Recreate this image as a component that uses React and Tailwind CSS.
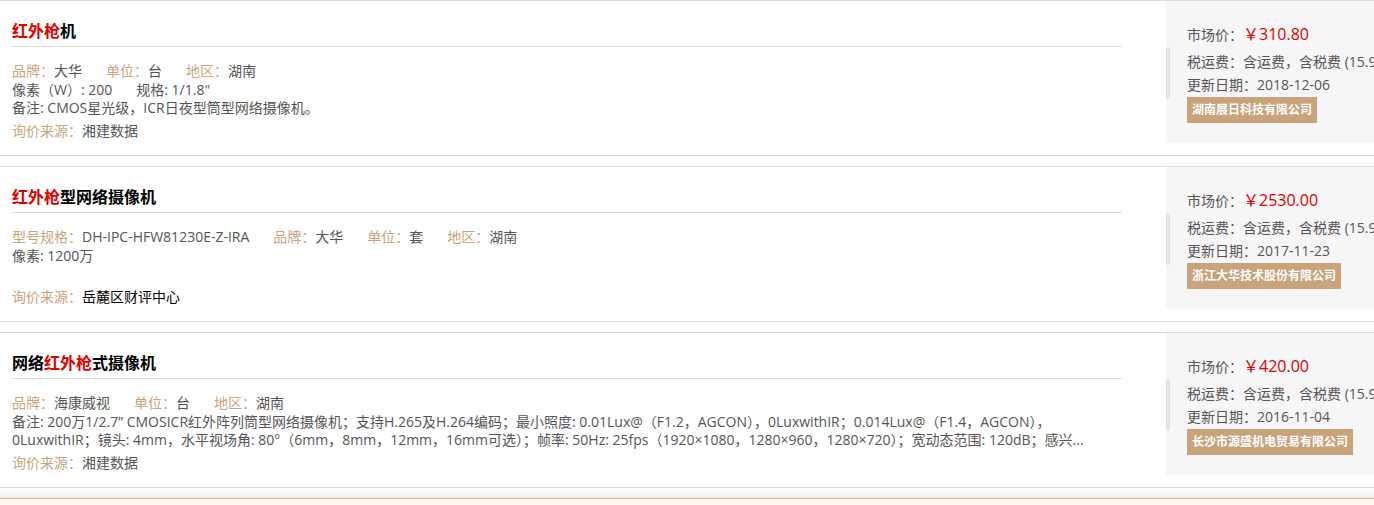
import React from "react";

const FONT = { fontFamily: '"Microsoft YaHei", "Open Sans", "Noto Sans CJK SC", sans-serif' };

function Field({ label, value }) {
  return (
    <span className="mr-[24px] whitespace-nowrap">
      <span className="text-[#c9a47e]">{label}：</span>
      <span className="text-[#555]">{value}</span>
    </span>
  );
}

function ItemWrap({ title, fields, lines, source, sourceClass, price, date, company }) {
  return (
    <div className="flex border-y border-[#dddddd] h-[156px]">
      <div className="ml-[11px] w-[1111px] shrink-0">
        <div className="pt-[17px] h-[46px] border-b border-[#dddddd] text-[16px] leading-[26px] font-bold text-black pl-[1px] whitespace-nowrap">
          {title}
        </div>
        <div className="mt-[15px] h-[57px] overflow-hidden text-[14px] leading-[18.5px] text-[#555] pl-[1px]">
          <div className="whitespace-nowrap">
            {fields.map((f, i) => (
              <Field key={i} label={f[0]} value={f[1]} />
            ))}
          </div>
          {lines.map((l, i) => (
            <div key={i} className="whitespace-nowrap overflow-hidden">
              {l}
            </div>
          ))}
        </div>
        <div className="mt-[2px] text-[14px] leading-[19px] pl-[1px]">
          <span className="text-[#c9a47e]">询价来源：</span>
          <span className={sourceClass}>{source}</span>
        </div>
      </div>
      <div className="ml-[44px] w-[260px] shrink-0 h-[142px] bg-[#f6f6f6] relative pl-[21px] pt-[19px] text-[14px] text-[#555] whitespace-nowrap">
        <span className="absolute left-0 top-[46px] w-[4px] h-[52px] rounded-[2px] bg-[#e8e8e8] border border-[#dedede]"></span>
        <div className="h-[28px] leading-[28px]">
          市场价：<span className="text-[16px] text-[#e00000]">{price}</span>
        </div>
        <div className="mt-[2px] leading-[24px]">税运费：含运费，含税费 (15.90%)</div>
        <div className="leading-[22px]">更新日期：{date}</div>
        <div className="mt-[1px] inline-block h-[26px] leading-[26px] px-[5px] bg-[#c9a37b] text-white text-[12px] font-bold">
          {company}
        </div>
      </div>
    </div>
  );
}

export default function App() {
  return (
    <div className="w-[1374px] h-[505px] overflow-hidden bg-white" style={FONT}>
      <div className="flex flex-col gap-[10px]">
        <ItemWrap
          title={<><span className="text-[#e00000]">红外枪</span>机</>}
          fields={[["品牌", "大华"], ["单位", "台"], ["地区", "湖南"]]}
          lines={[
            <>
              <span className="mr-[24px]">像素（W）: 200</span>
              <span>规格: 1/1.8"</span>
            </>,
            "备注: CMOS星光级，ICR日夜型筒型网络摄像机。",
          ]}
          source="湘建数据"
          sourceClass="text-[#555]"
          price="￥310.80"
          date="2018-12-06"
          company="湖南展日科技有限公司"
        />
        <ItemWrap
          title={<><span className="text-[#e00000]">红外枪</span>型网络摄像机</>}
          fields={[["型号规格", "DH-IPC-HFW81230E-Z-IRA"], ["品牌", "大华"], ["单位", "套"], ["地区", "湖南"]]}
          lines={["像素: 1200万"]}
          source="岳麓区财评中心"
          sourceClass="text-black"
          price="￥2530.00"
          date="2017-11-23"
          company="浙江大华技术股份有限公司"
        />
        <ItemWrap
          title={<>网络<span className="text-[#e00000]">红外枪</span>式摄像机</>}
          fields={[["品牌", "海康威视"], ["单位", "台"], ["地区", "湖南"]]}
          lines={[
            "备注: 200万1/2.7” CMOSICR红外阵列筒型网络摄像机；支持H.265及H.264编码；最小照度: 0.01Lux@（F1.2，AGCON），0LuxwithIR；0.014Lux@（F1.4，AGCON），",
            "0LuxwithIR；镜头: 4mm，水平视场角: 80°（6mm，8mm，12mm，16mm可选）；帧率: 50Hz: 25fps（1920×1080，1280×960，1280×720）；宽动态范围: 120dB；感兴...",
          ]}
          source="湘建数据"
          sourceClass="text-[#555]"
          price="￥420.00"
          date="2016-11-04"
          company="长沙市源盛机电贸易有限公司"
        />
      </div>
      <div className="h-[10px] bg-gradient-to-b from-white to-[#eeeeee]"></div>
      <div className="h-[8px] border-t border-[#e2b27c] bg-[#fdfaf6]"></div>
    </div>
  );
}
